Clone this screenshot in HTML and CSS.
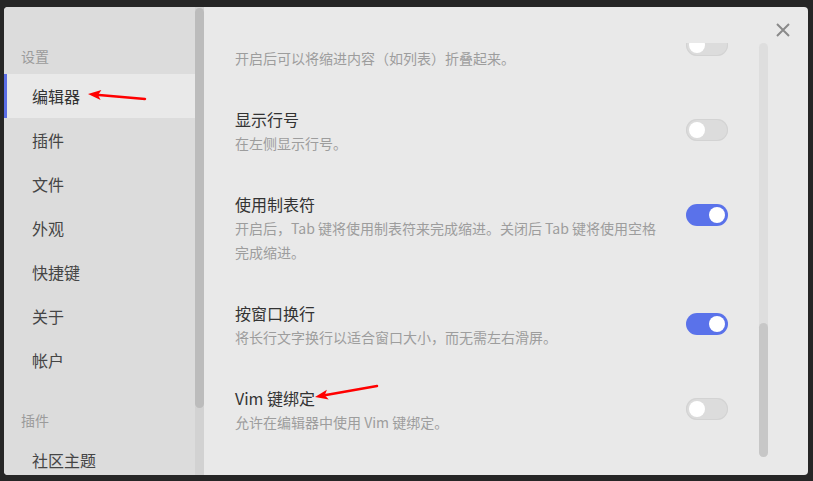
FILE: index.html
```html
<!DOCTYPE html>
<html lang="zh-CN">
  <head>
    <meta charset="UTF-8" />
    <meta name="viewport" content="width=device-width, initial-scale=1.0" />
    <title>设置</title>
    <link rel="stylesheet" href="styles.css">
  </head>
  <body>
    <div class="modal">
      <aside class="sidebar">
        <div class="nav-group">设置</div>
        <a class="nav-item active">编辑器</a>
        <a class="nav-item">插件</a>
        <a class="nav-item">文件</a>
        <a class="nav-item">外观</a>
        <a class="nav-item">快捷键</a>
        <a class="nav-item">关于</a>
        <a class="nav-item">帐户</a>
        <div class="nav-group second">插件</div>
        <a class="nav-item">社区主题</a>
      </aside>
      <div class="side-scroll"><div class="side-thumb"></div></div>

      <section class="content">
        <div class="content-head">
          <button class="close" aria-label="关闭">
            <svg width="14" height="14" viewBox="0 0 14 14">
              <path d="M1 1 L13 13 M13 1 L1 13" stroke="#8a8a8a" stroke-width="2" fill="none" />
            </svg>
          </button>
        </div>
        <div class="content-body">
          <div class="settings">
            <div class="settings-inner">
              <div class="setting">
                <div class="setting-info">
                  <div class="setting-name">折叠缩进</div>
                  <div class="setting-desc">开启后可以将缩进内容（如列表）折叠起来。</div>
                </div>
                <div class="toggle"><span class="knob"></span></div>
              </div>
              <div class="setting">
                <div class="setting-info">
                  <div class="setting-name">显示行号</div>
                  <div class="setting-desc">在左侧显示行号。</div>
                </div>
                <div class="toggle"><span class="knob"></span></div>
              </div>
              <div class="setting">
                <div class="setting-info">
                  <div class="setting-name">使用制表符</div>
                  <div class="setting-desc">开启后，Tab 键将使用制表符来完成缩进。关闭后 Tab 键将使用空格完成缩进。</div>
                </div>
                <div class="toggle on"><span class="knob"></span></div>
              </div>
              <div class="setting">
                <div class="setting-info">
                  <div class="setting-name">按窗口换行</div>
                  <div class="setting-desc">将长行文字换行以适合窗口大小，而无需左右滑屏。</div>
                </div>
                <div class="toggle on"><span class="knob"></span></div>
              </div>
              <div class="setting">
                <div class="setting-info">
                  <div class="setting-name">Vim 键绑定</div>
                  <div class="setting-desc">允许在编辑器中使用 Vim 键绑定。</div>
                </div>
                <div class="toggle"><span class="knob"></span></div>
              </div>
            </div>
          </div>
          <div class="scrollbar"><div class="thumb"></div></div>
        </div>
      </section>
    </div>

    <!-- red annotation arrows drawn over the screenshot -->
    <svg class="annotations" width="813" height="481" viewBox="0 0 813 481">
      <line x1="145" y1="99" x2="99" y2="95" stroke="#f00" stroke-width="2.5" stroke-linecap="round" />
      <polygon points="88,94 101.4,90.1 98,94.9 100.6,100.1" fill="#f00" />
      <line x1="377" y1="386" x2="326" y2="395" stroke="#f00" stroke-width="2.5" stroke-linecap="round" />
      <polygon points="315,397 326.9,389.8 324.8,395.2 328.7,399.6" fill="#f00" />
    </svg>
  </body>
</html>
```

FILE: styles.css
```css
body {
  margin: 0;
  height: 481px;
  overflow: hidden;
  background-color: #262626;
  font-family: "Noto Sans CJK SC", "Microsoft YaHei", sans-serif;
  position: relative;
}

.modal {
  display: flex;
  width: 804px;
  height: 468px;
  margin: 7px 0 0 4px;
  border-radius: 4px;
  overflow: hidden;
  background-color: #e9e9e9;
}

/* left navigation */
.sidebar {
  width: 191px;
  flex-shrink: 0;
  padding-top: 37px;
  box-sizing: border-box;
  background-color: #dcdcdc;
}

.nav-group {
  padding-left: 17px;
  font-size: 14px;
  line-height: 24px;
  color: #9b9b9b;
  margin-bottom: 6px;
}

.nav-group.second {
  margin-top: 26px;
}

.nav-item {
  display: block;
  height: 44px;
  line-height: 44px;
  padding-left: 25px;
  border-left: 3px solid transparent;
  font-size: 16px;
  color: #454545;
}

.nav-item.active {
  background-color: #e9e9e9;
  border-left-color: #5b6ee6;
  color: #333;
}

.side-scroll {
  width: 9px;
  flex-shrink: 0;
  background-color: #d2d2d2;
}

.side-thumb {
  height: 400px;
  margin-top: 1px;
  border-radius: 5px;
  background-color: #bcbcbc;
}

/* right panel */
.content {
  flex: 1;
  display: flex;
  flex-direction: column;
}

.content-head {
  height: 36px;
  display: flex;
  justify-content: flex-end;
  align-items: flex-start;
  padding: 16px 18px 0 0;
  box-sizing: border-box;
}

.close {
  width: 14px;
  height: 14px;
  padding: 0;
  border: none;
  background: none;
  display: flex;
}

.content-body {
  height: 414px;
  display: flex;
}

.settings {
  flex: 1;
  overflow: hidden;
  padding: 0 31px;
}

.settings-inner {
  margin-top: -39px;
}

.setting {
  display: flex;
  align-items: flex-start;
  padding: 18px 0 19px;
}

.setting-info {
  flex: 1;
  margin-right: 20px;
}

.setting-name {
  font-size: 16px;
  line-height: 24px;
  color: #333;
}

.setting-desc {
  font-size: 14px;
  line-height: 24px;
  color: #9d9d9d;
}

.toggle {
  width: 42px;
  height: 22px;
  flex-shrink: 0;
  margin-top: 12px;
  padding: 0 3px;
  box-sizing: border-box;
  border-radius: 11px;
  display: flex;
  align-items: center;
  background-color: #dcdcdc;
  box-shadow: inset 0 0 0 1px #d3d3d3;
}

.toggle.on {
  justify-content: flex-end;
  background-color: #5a72ea;
  box-shadow: none;
}

.knob {
  width: 16px;
  height: 16px;
  border-radius: 50%;
  background-color: #fff;
}

.scrollbar {
  width: 9px;
  margin-right: 40px;
  border-radius: 5px;
  display: flex;
  flex-direction: column;
  justify-content: flex-end;
  background-color: #dedede;
}

.scrollbar .thumb {
  height: 134px;
  border-radius: 5px;
  background-color: #c7c7c7;
}

.annotations {
  position: absolute;
  left: 0;
  top: 0;
  pointer-events: none;
}
```
